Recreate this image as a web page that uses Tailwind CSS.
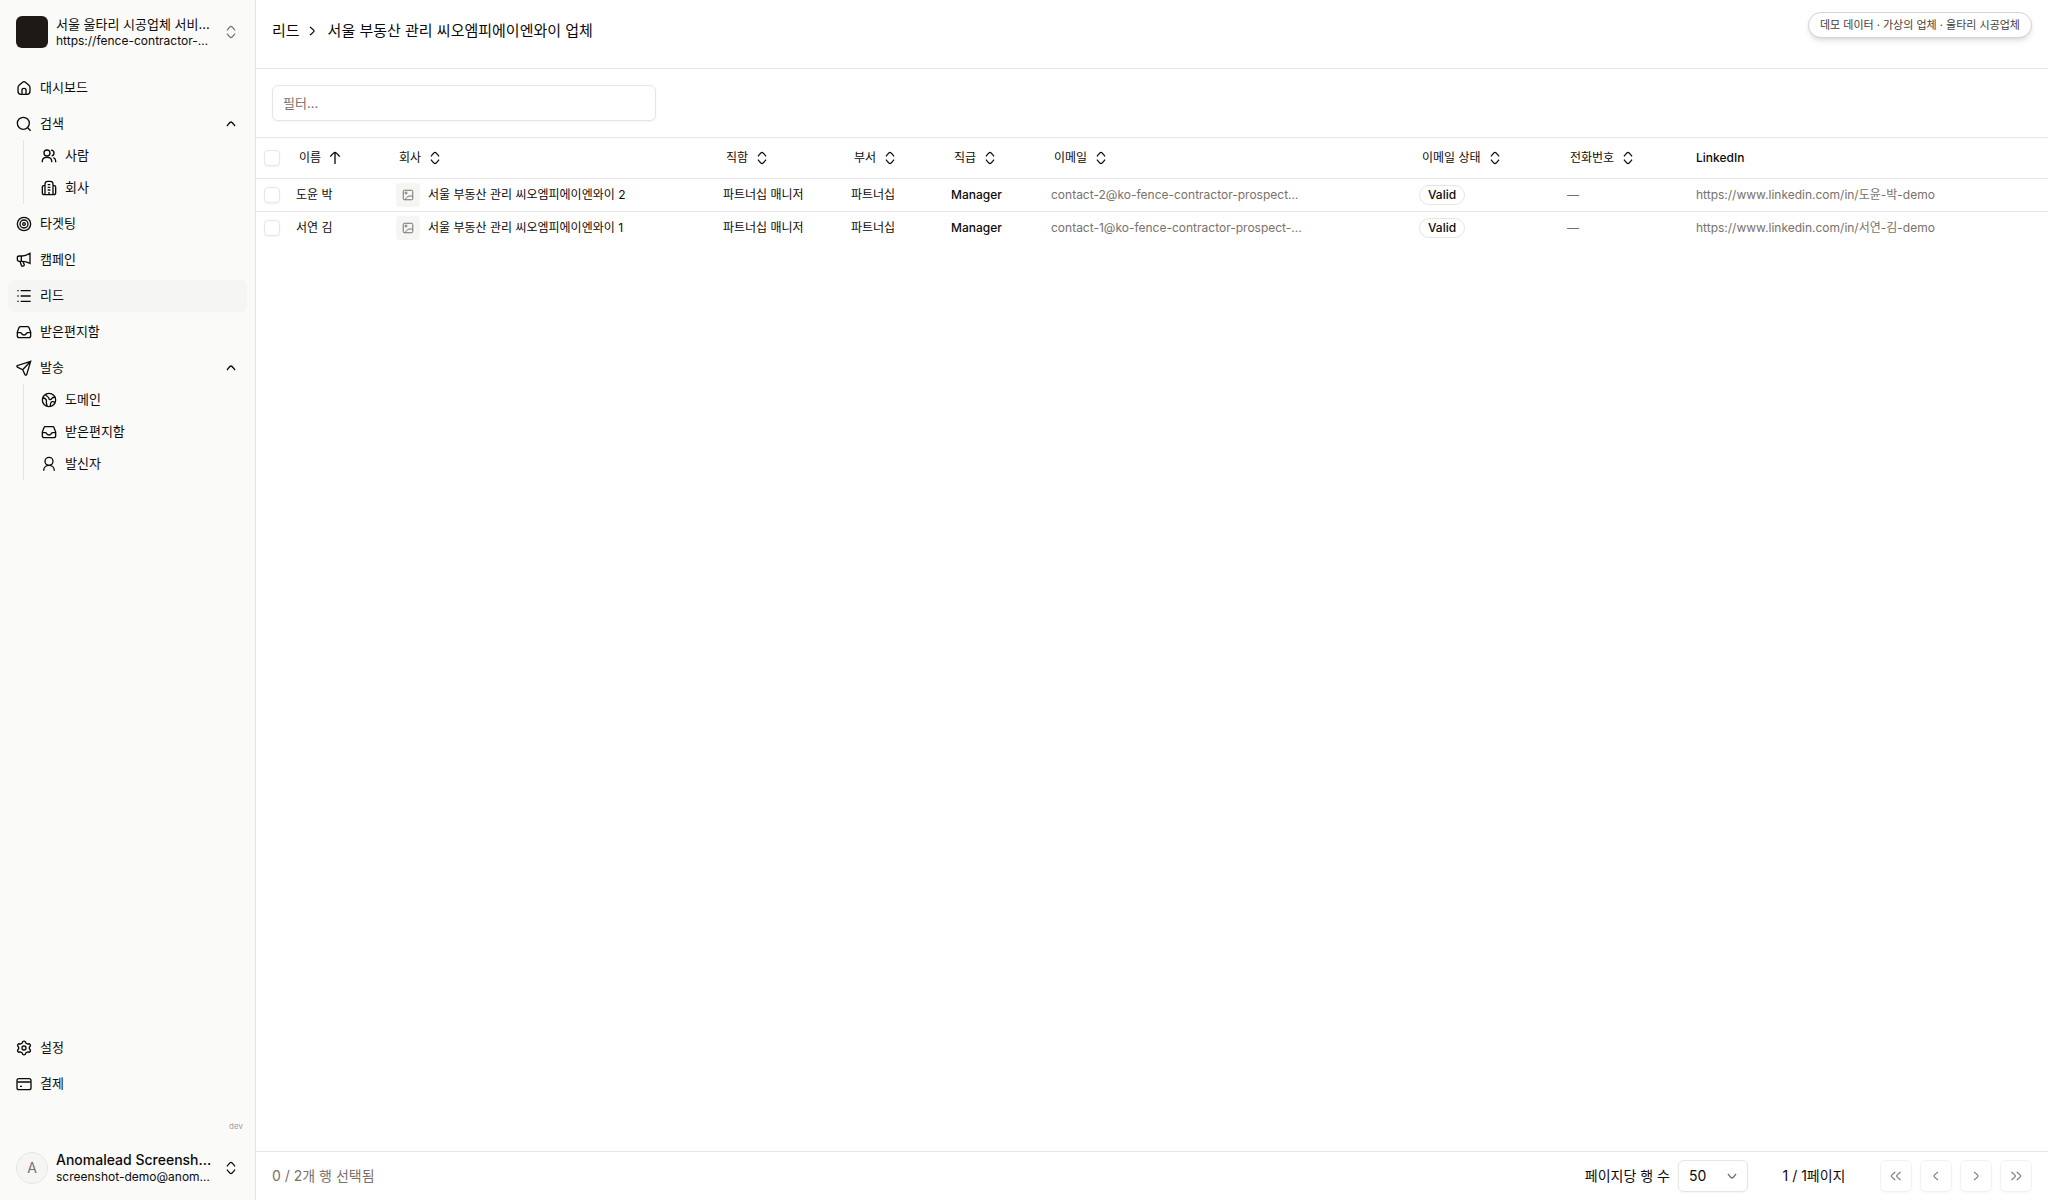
<!DOCTYPE html>
<html lang="ko">
<head>
    <meta charset="UTF-8">
    <meta name="viewport" content="width=device-width, initial-scale=1.0">
    <title>리드</title>
    <script src="https://cdn.jsdelivr.net/npm/@tailwindcss/browser@4"></script>
    <style>
        body {
            font-family: Inter, 'Noto Sans CJK KR', sans-serif;
        }
    </style>
</head>
<body class="flex h-screen bg-white text-stone-950">

<!-- Shared icons -->
<svg class="hidden" aria-hidden="true">
    <symbol id="i-sort" viewBox="0 0 24 24"><path d="M18 14.500s-4.420 6-6 6-6-6-6-6M18 9.500s-4.420-6-6-6-6 6-6 6"/></symbol>
    <symbol id="i-up" viewBox="0 0 24 24"><path d="M18 15s-4.420-6-6-6-6 6-6 6"/></symbol>
    <symbol id="i-down" viewBox="0 0 24 24"><path d="M18 9s-4.420 6-6 6-6-6-6-6"/></symbol>
    <symbol id="i-right" viewBox="0 0 24 24"><path d="M9 6s6 4.420 6 6-6 6-6 6"/></symbol>
    <symbol id="i-left" viewBox="0 0 24 24"><path d="M15 6s-6 4.420-6 6 6 6 6 6"/></symbol>
    <symbol id="i-inbox" viewBox="0 0 24 24"><path d="M2 13h4.500c1 0 1.500.5 2 1.500.6 1.200 1.500 2 3.500 2s2.900-.8 3.500-2c.5-1 1-1.500 2-1.500H22M6.500 4h11c1.200 0 1.700.5 2.100 1.500L22 12v5.500c0 2-1 3-3 3H5c-2 0-3-1-3-3V12l2.400-6.500C4.800 4.500 5.300 4 6.500 4z"/></symbol>
    <symbol id="i-image" viewBox="0 0 24 24"><rect x="2.500" y="2.500" width="19" height="19" rx="2"/><circle cx="8" cy="8" r="2"/><path d="M6 21.500c3-6 8-9 15.500-7"/></symbol>
</svg>

<aside class="flex w-64 shrink-0 flex-col border-r border-stone-200 bg-stone-50">
    <button class="flex items-center gap-2 px-4 pt-[15px] pb-4 text-left">
        <span class="size-8 shrink-0 rounded-md bg-stone-900"></span>
        <span class="min-w-0 flex-1">
            <span class="block truncate text-[13px] leading-[18px]">서울 울타리 시공업체 서비…</span>
            <span class="block truncate text-xs leading-4">https://fence-contractor-…</span>
        </span>
        <svg class="size-4 shrink-0 fill-none stroke-stone-500 stroke-2"><use href="#i-sort"/></svg>
    </button>

    <nav class="flex flex-1 flex-col gap-1 px-2 pt-[7px] text-[13px]">
        <a href="#" class="flex h-8 items-center gap-2 rounded-md px-2">
            <svg viewBox="0 0 24 24" class="size-4 fill-none stroke-current stroke-2"><path d="M3 11.500 C3 9.500 3.500 8.800 5 7.500 L10 3.200 Q12 1.500 14 3.200 L19 7.500 C20.500 8.800 21 9.500 21 11.500 V17 C21 20.500 20 21.500 16.500 21.500 H7.500 C4 21.500 3 20.500 3 17 Z M9 21.500 V15 Q9 12.500 12 12.500 T15 15 V21.500"/></svg>
            대시보드
        </a>
        <div>
            <button class="flex h-8 w-full items-center gap-2 rounded-md px-2">
                <svg viewBox="0 0 24 24" class="size-4 fill-none stroke-current stroke-2"><circle cx="11" cy="11" r="9"/><path d="m17.500 17.500 4.500 4.500"/></svg>
                검색
                <svg class="ml-auto size-4 fill-none stroke-current stroke-2"><use href="#i-up"/></svg>
            </button>
            <div class="ml-[15px] flex flex-col border-l border-stone-200 pl-[9px]">
                <a href="#" class="flex h-8 items-center gap-2 px-2">
                    <svg viewBox="0 0 24 24" class="size-4 fill-none stroke-current stroke-2"><circle cx="9" cy="7.500" r="4.500"/><path d="M2 21.500v-2c0-3.500 2.500-5.500 7-5.500s7 2 7 5.500v2M15 3.200c2.500 0 4.500 1.800 4.500 4.300s-1.500 4-3.500 4.400M18.500 14.500c2.500 1 3.500 2.500 3.500 5v2"/></svg>
                    사람
                </a>
                <a href="#" class="flex h-8 items-center gap-2 px-2">
                    <svg viewBox="0 0 24 24" class="size-4 fill-none stroke-current stroke-2"><path d="M6 22V6q0-4 4-4h4q4 0 4 4v16M6 8H5q-3 0-3 3v8q0 3 3 3h14q3 0 3-3v-8q0-3-3-3h-1M10 7h4M10 11h4M10 15h4M12 18v4"/></svg>
                    회사
                </a>
            </div>
        </div>
        <a href="#" class="flex h-8 items-center gap-2 rounded-md px-2">
            <svg viewBox="0 0 24 24" class="size-4 fill-none stroke-current stroke-2"><circle cx="12" cy="12" r="10"/><circle cx="12" cy="12" r="6"/><circle cx="12" cy="12" r="2"/></svg>
            타겟팅
        </a>
        <a href="#" class="flex h-8 items-center gap-2 rounded-md px-2">
            <svg viewBox="0 0 24 24" class="size-4 fill-none stroke-current stroke-2"><path d="M2 8.500Q2 6 5 6h4q5 0 12-4v15q-6-3-12-3H5q-3 0-3-3zM8 6v8M6 14l2 6q1 2 3 1t1-3l-2-4"/></svg>
            캠페인
        </a>
        <a href="#" class="flex h-8 items-center gap-2 rounded-md bg-stone-100 px-2" aria-current="page">
            <svg viewBox="0 0 24 24" class="size-4 fill-none stroke-current stroke-2"><path d="M7 4h15M7 12h15M7 20h15M2 4h2M2 12h2M2 20h2"/></svg>
            리드
        </a>
        <a href="#" class="flex h-8 items-center gap-2 rounded-md px-2">
            <svg class="size-4 fill-none stroke-current stroke-2"><use href="#i-inbox"/></svg>
            받은편지함
        </a>
        <div>
            <button class="flex h-8 w-full items-center gap-2 rounded-md px-2">
                <svg viewBox="0 0 24 24" class="size-4 fill-none stroke-current stroke-2"><path d="M22 2 1.500 8.500q-.5 2 2 3l6.500 3 3 6.500q1 2.500 3 1zM22 2 10 14.500"/></svg>
                발송
                <svg class="ml-auto size-4 fill-none stroke-current stroke-2"><use href="#i-up"/></svg>
            </button>
            <div class="ml-[15px] flex flex-col border-l border-stone-200 pl-[9px]">
                <a href="#" class="flex h-8 items-center gap-2 px-2">
                    <svg viewBox="0 0 24 24" class="size-4 fill-none stroke-current stroke-2"><circle cx="12" cy="12" r="10"/><path d="M7 3.500c0 4 5 2.500 5 6.500 0 2 3 2 4 0s2.500-2.500 5.500-2M2 9c5 0 7 3 6 6-.5 2 1 3 1 6.500M21 15.500c-3-2-6-1-6.500 1.500-.3 2-.5 3-.5 4.500"/></svg>
                    도메인
                </a>
                <a href="#" class="flex h-8 items-center gap-2 px-2">
                    <svg class="size-4 fill-none stroke-current stroke-2"><use href="#i-inbox"/></svg>
                    받은편지함
                </a>
                <a href="#" class="flex h-8 items-center gap-2 px-2">
                    <svg viewBox="0 0 24 24" class="size-4 fill-none stroke-current stroke-2"><circle cx="12" cy="8" r="6"/><path d="M4 22c0-4.500 3-8 8-8s8 3.500 8 8"/></svg>
                    발신자
                </a>
            </div>
        </div>

        <a href="#" class="mt-auto flex h-8 items-center gap-2 rounded-md px-2">
            <svg viewBox="0 0 24 24" class="size-4 fill-none stroke-current stroke-2"><path d="M10 2.500q2-1.500 4 0l1 2.500 2.500 1 2.500-.3q2.200 1.300 1.500 3.300L20 11v2l1.500 2q.7 2-1.500 3.300l-2.500-.3-2.500 1-1 2.500q-2 1.500-4 0L9 19l-2.500-1-2.500.3Q1.800 17 2.500 15L4 13v-2L2.500 9Q1.800 7 4 5.700l2.500.3L9 5z"/><circle cx="12" cy="12" r="3"/></svg>
            설정
        </a>
        <a href="#" class="flex h-8 items-center gap-2 rounded-md px-2">
            <svg viewBox="0 0 24 24" class="size-4 fill-none stroke-current stroke-2"><rect x="1.500" y="4" width="21" height="16.500" rx="3"/><path d="M2 9h20M6 15.500h3"/></svg>
            결제
        </a>
    </nav>

    <p class="px-3 pt-5 text-right text-[8px] leading-3 text-stone-400">dev</p>
    <button class="flex items-center gap-2 px-4 pt-[19px] pb-[15px] text-left">
        <span class="flex size-8 shrink-0 items-center justify-center rounded-full border border-stone-200 bg-stone-100 text-sm text-stone-500">A</span>
        <span class="min-w-0 flex-1">
            <span class="block truncate text-sm leading-[18px] font-medium">Anomalead Screensh…</span>
            <span class="block truncate text-xs leading-4">screenshot-demo@anom…</span>
        </span>
        <svg class="size-4 shrink-0 fill-none stroke-current stroke-2"><use href="#i-sort"/></svg>
    </button>
</aside>

<main class="relative flex min-w-0 flex-1 flex-col">
    <header class="flex h-[69px] items-start border-b border-stone-200 px-4 pt-[15px]">
        <nav class="flex h-8 items-center text-[15px]">
            <a href="#">리드</a>
            <svg class="mr-2 ml-1 size-4 fill-none stroke-current stroke-2"><use href="#i-right"/></svg>
            <span>서울 부동산 관리 씨오엠피에이엔와이 업체</span>
        </nav>
    </header>
    <div class="absolute top-3 right-4 rounded-full border border-stone-300 bg-white px-[11px] text-[11px] leading-6 text-stone-700 shadow-md">데모 데이터 · 가상의 업체 · 울타리 시공업체</div>

    <div class="border-b border-stone-200 p-4">
        <input type="text" aria-label="필터" placeholder="필터..." class="block h-9 w-96 rounded-md border border-stone-200 px-[10px] text-[13px] shadow-xs placeholder:text-stone-500">
    </div>

    <div class="flex-1 overflow-auto">
        <table class="w-full table-fixed text-left text-xs whitespace-nowrap">
            <colgroup>
                <col class="w-8">
                <col class="w-[100px]">
                <col class="w-[327px]">
                <col class="w-32">
                <col class="w-[100px]">
                <col class="w-[100px]">
                <col class="w-[368px]">
                <col class="w-[148px]">
                <col class="w-[129px]">
                <col>
            </colgroup>
            <thead>
                <tr class="h-10 border-b border-stone-200">
                    <th class="px-2"><input type="checkbox" aria-label="모두 선택" class="block size-4 appearance-none rounded-sm border border-stone-200 shadow-xs"></th>
                    <th class="px-[11px] font-normal"><button class="flex items-center gap-1.5">이름 <svg viewBox="0 0 24 24" class="size-4 fill-none stroke-current stroke-2"><path d="M12 4v17M5 10s5-6.500 7-6.500S19 10 19 10"/></svg></button></th>
                    <th class="px-[11px] font-normal"><button class="flex items-center gap-1.5">회사 <svg class="size-4 fill-none stroke-current stroke-2"><use href="#i-sort"/></svg></button></th>
                    <th class="px-[11px] font-normal"><button class="flex items-center gap-1.5">직함 <svg class="size-4 fill-none stroke-current stroke-2"><use href="#i-sort"/></svg></button></th>
                    <th class="px-[11px] font-normal"><button class="flex items-center gap-1.5">부서 <svg class="size-4 fill-none stroke-current stroke-2"><use href="#i-sort"/></svg></button></th>
                    <th class="px-[11px] font-normal"><button class="flex items-center gap-1.5">직급 <svg class="size-4 fill-none stroke-current stroke-2"><use href="#i-sort"/></svg></button></th>
                    <th class="px-[11px] font-normal"><button class="flex items-center gap-1.5">이메일 <svg class="size-4 fill-none stroke-current stroke-2"><use href="#i-sort"/></svg></button></th>
                    <th class="px-[11px] font-normal"><button class="flex items-center gap-1.5">이메일 상태 <svg class="size-4 fill-none stroke-current stroke-2"><use href="#i-sort"/></svg></button></th>
                    <th class="px-[11px] font-normal"><button class="flex items-center gap-1.5">전화번호 <svg class="size-4 fill-none stroke-current stroke-2"><use href="#i-sort"/></svg></button></th>
                    <th class="px-2 font-medium">LinkedIn</th>
                </tr>
            </thead>
            <tbody>
                <tr class="h-[33px] border-b border-stone-200">
                    <td class="px-2"><input type="checkbox" aria-label="도윤 박 선택" class="block size-4 appearance-none rounded-sm border border-stone-200 shadow-xs"></td>
                    <td class="px-2">도윤 박</td>
                    <td class="px-2"><div class="flex items-center gap-2"><span class="flex size-6 items-center justify-center rounded-sm bg-stone-100"><svg class="size-3 fill-none stroke-stone-500 stroke-2"><use href="#i-image"/></svg></span>서울 부동산 관리 씨오엠피에이엔와이 2</div></td>
                    <td class="px-2">파트너십 매니저</td>
                    <td class="px-2">파트너십</td>
                    <td class="px-2 font-medium">Manager</td>
                    <td class="px-2 text-stone-500"><div class="w-64 truncate">contact-2@ko-fence-contractor-prospect…</div></td>
                    <td class="px-2"><span class="inline-block rounded-full border border-stone-200 px-2 leading-[18px] font-medium">Valid</span></td>
                    <td class="px-2 text-stone-500">—</td>
                    <td class="px-2 text-stone-500"><a href="#">https://www.linkedin.com/in/도윤-박-demo</a></td>
                </tr>
                <tr class="h-[33px]">
                    <td class="px-2"><input type="checkbox" aria-label="서연 김 선택" class="block size-4 appearance-none rounded-sm border border-stone-200 shadow-xs"></td>
                    <td class="px-2">서연 김</td>
                    <td class="px-2"><div class="flex items-center gap-2"><span class="flex size-6 items-center justify-center rounded-sm bg-stone-100"><svg class="size-3 fill-none stroke-stone-500 stroke-2"><use href="#i-image"/></svg></span>서울 부동산 관리 씨오엠피에이엔와이 1</div></td>
                    <td class="px-2">파트너십 매니저</td>
                    <td class="px-2">파트너십</td>
                    <td class="px-2 font-medium">Manager</td>
                    <td class="px-2 text-stone-500"><div class="w-64 truncate">contact-1@ko-fence-contractor-prospect-…</div></td>
                    <td class="px-2"><span class="inline-block rounded-full border border-stone-200 px-2 leading-[18px] font-medium">Valid</span></td>
                    <td class="px-2 text-stone-500">—</td>
                    <td class="px-2 text-stone-500"><a href="#">https://www.linkedin.com/in/서연-김-demo</a></td>
                </tr>
            </tbody>
        </table>
    </div>

    <footer class="flex items-center border-t border-stone-200 px-4 py-2 text-sm">
        <p class="flex-1 text-stone-500">0 / 2개 행 선택됨</p>
        <label for="page-size" class="mr-2">페이지당 행 수</label>
        <div class="relative">
            <select id="page-size" class="block h-8 w-[70px] appearance-none rounded-md border border-stone-200 pl-[10px] shadow-xs"><option>50</option></select>
            <svg class="pointer-events-none absolute top-2 right-2 size-4 fill-none stroke-stone-500 stroke-2"><use href="#i-down"/></svg>
        </div>
        <p class="w-33 text-center">1 / 1페이지</p>
        <div class="flex gap-2">
            <button disabled aria-label="첫 페이지" class="flex size-8 items-center justify-center rounded-md border border-stone-200 opacity-50 shadow-xs"><svg viewBox="0 0 24 24" class="size-4 fill-none stroke-current stroke-2"><path d="M11 6s-6 4.420-6 6 6 6 6 6M19 6s-6 4.420-6 6 6 6 6 6"/></svg></button>
            <button disabled aria-label="이전 페이지" class="flex size-8 items-center justify-center rounded-md border border-stone-200 opacity-50 shadow-xs"><svg class="size-4 fill-none stroke-current stroke-2"><use href="#i-left"/></svg></button>
            <button disabled aria-label="다음 페이지" class="flex size-8 items-center justify-center rounded-md border border-stone-200 opacity-50 shadow-xs"><svg class="size-4 fill-none stroke-current stroke-2"><use href="#i-right"/></svg></button>
            <button disabled aria-label="마지막 페이지" class="flex size-8 items-center justify-center rounded-md border border-stone-200 opacity-50 shadow-xs"><svg viewBox="0 0 24 24" class="size-4 fill-none stroke-current stroke-2"><path d="M5 6s6 4.420 6 6-6 6-6 6M13 6s6 4.420 6 6-6 6-6 6"/></svg></button>
        </div>
    </footer>
</main>

</body>
</html>
